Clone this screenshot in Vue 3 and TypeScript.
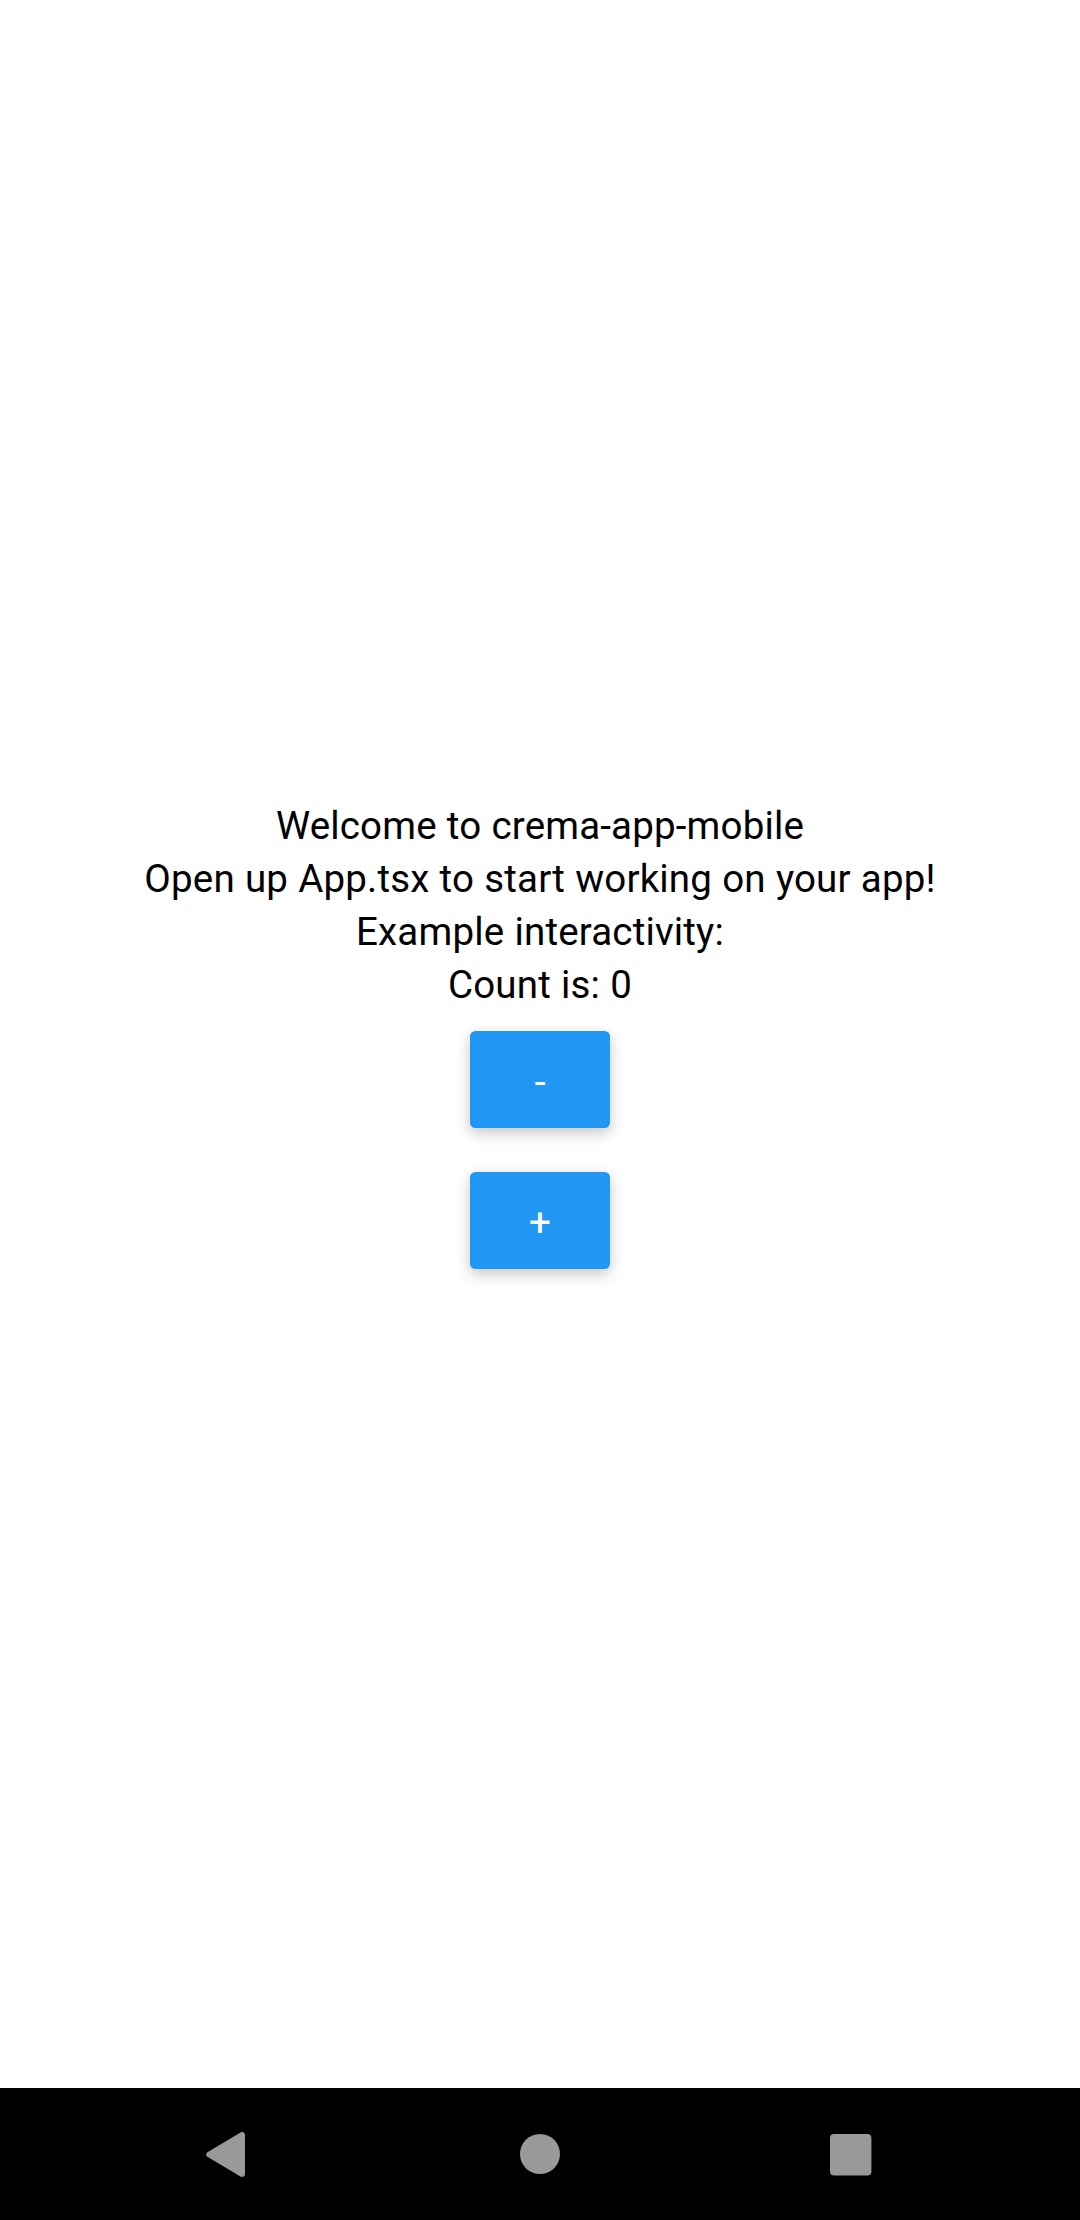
<script setup lang="ts">
import { ref } from 'vue'

const count = ref<number>(0)
</script>

<template>
  <div class="screen">
    <main class="content">
      <p class="line">Welcome to crema-app-mobile</p>
      <p class="line">Open up App.tsx to start working on your app!</p>
      <p class="line">Example interactivity:</p>
      <p class="line">Count is: {{ count }}</p>
      <div class="actions">
        <button class="action" type="button" @click="count--">-</button>
        <button class="action" type="button" @click="count++">+</button>
      </div>
    </main>
    <nav class="navbar">
      <svg class="key" viewBox="0 0 60 60" aria-label="Back">
        <path class="back" d="M13.3 30.5 L46 11 V50 Z" />
      </svg>
      <svg class="key" viewBox="0 0 60 60" aria-label="Home">
        <circle cx="30" cy="30" r="20" />
      </svg>
      <svg class="key" viewBox="0 0 60 60" aria-label="Recents">
        <rect x="6" y="10" width="41.4" height="41.4" rx="4" />
      </svg>
    </nav>
  </div>
</template>

<style>
body {
  margin: 0;
  background: #fff;
}
</style>

<style scoped>
.screen {
  display: flex;
  flex-direction: column;
  height: 2220px;
  background: #fff;
  font-family: Roboto, sans-serif;
}

.content {
  flex: 1;
  display: flex;
  flex-direction: column;
  align-items: center;
  justify-content: center;
}

.line {
  margin: 0;
  font-size: 38.5px;
  line-height: 53px;
  letter-spacing: 0.17px;
  word-spacing: 0.4px;
  color: #000;
  white-space: nowrap;
}

.actions {
  display: flex;
  flex-direction: column;
  gap: 44px;
  padding: 20px 0;
}

.action {
  width: 140px;
  height: 97px;
  padding: 4px 0 0;
  border: 0;
  border-radius: 5.5px;
  background: #2196f3;
  color: #fff;
  font-family: inherit;
  font-size: 38.5px;
  font-weight: 400;
  line-height: 53px;
  -webkit-text-stroke: 0.2px #fff;
  box-shadow: 0 6px 15px rgba(0, 0, 0, 0.18), 0 1px 12px rgba(0, 0, 0, 0.06);
}

.navbar {
  box-sizing: border-box;
  height: 132px;
  padding: 0 196px;
  display: flex;
  align-items: center;
  justify-content: space-between;
  background: #000;
}

.key {
  width: 60px;
  height: 60px;
  fill: #999;
}

.back {
  stroke: #999;
  stroke-width: 6;
  stroke-linejoin: round;
}
</style>
